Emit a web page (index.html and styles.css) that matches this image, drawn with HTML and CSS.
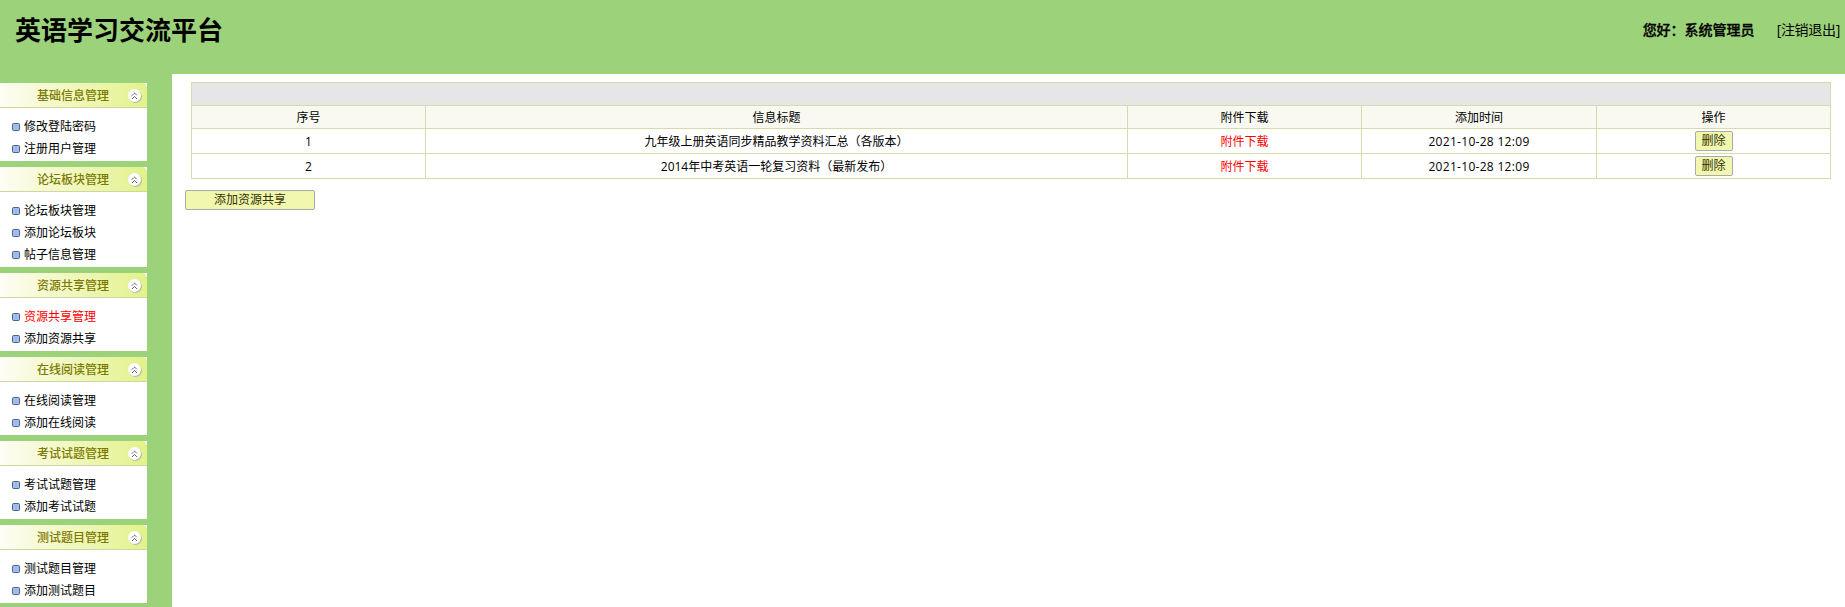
FILE: index.html
```html
<!DOCTYPE html>
<html lang="zh-CN">
<head>
<meta charset="utf-8">
<title>英语学习交流平台</title>
<link rel="stylesheet" href="styles.css">
</head>
<body>
<svg class="defs" width="0" height="0" aria-hidden="true">
  <symbol id="toggle" viewBox="0 0 16 16">
    <circle cx="8.5" cy="8.5" r="6.5" fill="#b9b9a8"/>
    <circle cx="7.5" cy="7.5" r="6.5" fill="#fff"/>
    <path d="M5 7.5 7.5 5 10 7.5M5 11 7.5 8.5 10 11" fill="none" stroke="#222" stroke-width="1" stroke-dasharray="1 .4"/>
  </symbol>
</svg>
<header class="top">
  <h1 class="brand">英语学习交流平台</h1>
  <div class="user">
    <span class="hello">您好：系统管理员</span>
    <a class="logout" href="#">[注销退出]</a>
  </div>
</header>
<div class="layout">
  <aside class="side">
    <section class="panel">
      <h2 class="panel-head"><span class="panel-title">基础信息管理</span><svg class="toggle"><use href="#toggle"/></svg></h2>
      <ul class="menu"><li>修改登陆密码</li><li>注册用户管理</li></ul>
    </section>
    <section class="panel">
      <h2 class="panel-head"><span class="panel-title">论坛板块管理</span><svg class="toggle"><use href="#toggle"/></svg></h2>
      <ul class="menu"><li>论坛板块管理</li><li>添加论坛板块</li><li>帖子信息管理</li></ul>
    </section>
    <section class="panel">
      <h2 class="panel-head"><span class="panel-title">资源共享管理</span><svg class="toggle"><use href="#toggle"/></svg></h2>
      <ul class="menu"><li class="active">资源共享管理</li><li>添加资源共享</li></ul>
    </section>
    <section class="panel">
      <h2 class="panel-head"><span class="panel-title">在线阅读管理</span><svg class="toggle"><use href="#toggle"/></svg></h2>
      <ul class="menu"><li>在线阅读管理</li><li>添加在线阅读</li></ul>
    </section>
    <section class="panel">
      <h2 class="panel-head"><span class="panel-title">考试试题管理</span><svg class="toggle"><use href="#toggle"/></svg></h2>
      <ul class="menu"><li>考试试题管理</li><li>添加考试试题</li></ul>
    </section>
    <section class="panel">
      <h2 class="panel-head"><span class="panel-title">测试题目管理</span><svg class="toggle"><use href="#toggle"/></svg></h2>
      <ul class="menu"><li>测试题目管理</li><li>添加测试题目</li></ul>
    </section>
  </aside>
  <main class="main">
    <table class="grid">
      <colgroup><col class="c1"><col class="c2"><col class="c3"><col class="c4"><col class="c5"></colgroup>
      <thead>
        <tr class="caption-row"><th colspan="5"></th></tr>
        <tr class="head-row"><th>序号</th><th>信息标题</th><th>附件下载</th><th>添加时间</th><th>操作</th></tr>
      </thead>
      <tbody>
        <tr><td>1</td><td>九年级上册英语同步精品教学资料汇总（各版本）</td><td class="red">附件下载</td><td class="date">2021-10-28 12:09</td><td><button class="btn del">删除</button></td></tr>
        <tr><td>2</td><td>2014年中考英语一轮复习资料（最新发布）</td><td class="red">附件下载</td><td class="date">2021-10-28 12:09</td><td><button class="btn del">删除</button></td></tr>
      </tbody>
    </table>
    <button class="btn add">添加资源共享</button>
  </main>
</div>
</body>
</html>
```
FILE: styles.css
```css
* { box-sizing: border-box; }
html, body { margin: 0; padding: 0; height: 100%; }
body {
  font-family: "Open Sans", "Noto Sans CJK SC", "Liberation Sans", sans-serif;
  font-size: 12px;
  color: #000;
  background: #fff;
  overflow: hidden;
}
.defs { display: block; height: 0; }
.top {
  height: 74px;
  background: #9cd27a;
  display: flex;
  justify-content: space-between;
  align-items: flex-start;
  padding: 0 5px 0 15px;
}
.brand {
  margin: 14px 0 0;
  font-size: 26px;
  line-height: 32px;
  font-weight: 700;
}
.user {
  display: flex;
  gap: 22px;
  margin-top: 20px;
  font-size: 14px;
  line-height: 20px;
}
.hello { font-weight: 500; -webkit-text-stroke: 0.3px #000; }
.logout { color: #000; text-decoration: none; letter-spacing: -0.3px; }
.layout { display: flex; height: 533px; }
.side {
  width: 172px;
  flex: none;
  background: #9cd27a;
  padding-top: 9px;
  display: flex;
  flex-direction: column;
  gap: 6px;
}
.panel { width: 147px; background: #fff; }
.panel-head {
  height: 25px;
  margin: 0;
  display: flex;
  align-items: center;
  padding: 1px 0 0 37px;
  font-size: 12px;
  font-weight: 500;
  color: #7c7a00;
  background: linear-gradient(90deg, #fdfdf6 0%, #f6f9d2 30%, #e2f28b 100%);
  border-bottom: 1px solid #cfd6a0;
  border-radius: 3px 5px 0 0;
}
.panel-title { width: 72px; font-size: 12px; line-height: 16px; white-space: nowrap; }
.toggle { width: 16px; height: 16px; margin-left: 18px; }
.menu { list-style: none; margin: 0; padding: 8px 0 1px; }
.menu li {
  height: 22px;
  line-height: 22px;
  padding-left: 24px;
  position: relative;
}
.menu li::before {
  content: "";
  position: absolute;
  left: 12px;
  top: 7px;
  width: 6px;
  height: 6px;
  border: 1px solid #55657c;
  border-radius: 1.5px;
  background: #9dbdf0;
}
.menu li.active { color: #f00; }
.main { flex: 1; padding: 8px 14px 0 13px; background: #fff; }
.grid {
  width: 1639px;
  margin-left: 6px;
  border-collapse: collapse;
  table-layout: fixed;
  border: 1px solid #d4dcaa;
}
.c1 { width: 234px; }
.c2 { width: 702px; }
.c3 { width: 234px; }
.c4 { width: 235px; }
.c5 { width: 234px; }
.grid th, .grid td {
  border: 1px solid #d4dcaa;
  padding: 0;
  text-align: center;
  font-weight: 400;
  font-size: 12px;
}
.caption-row th { height: 23px; background: #e6e6e6; }
.head-row th { height: 23px; background: #f9f9f1; }
.grid td { height: 25px; }
.grid td.date { letter-spacing: 0.3px; }
.red { color: #f00; }
.btn {
  font-family: inherit;
  font-size: 12px;
  color: #333300;
  background: #f2f7b0;
  border: 1px solid #aaa;
  padding: 0;
  display: block;
}
.del { width: 38px; height: 20px; border-radius: 2px; margin: 0 auto; line-height: 18px; }
.add { width: 130px; height: 20px; margin-top: 11px; border-radius: 2px; line-height: 18px; }
```
